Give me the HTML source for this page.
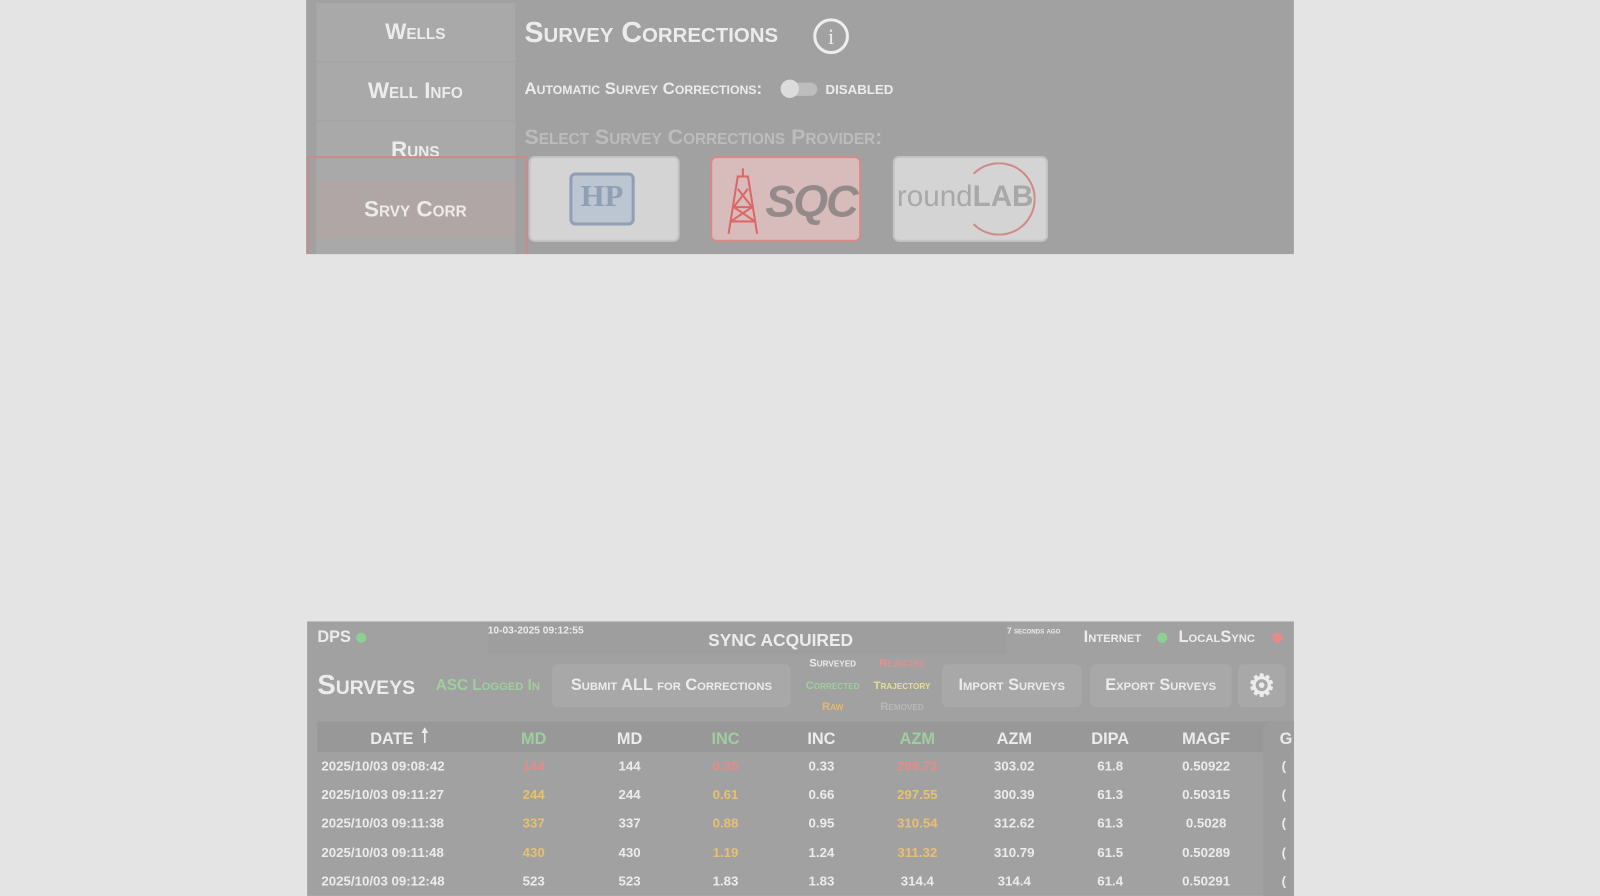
<!DOCTYPE html>
<html><head><style>
html,body{margin:0;padding:0;width:1600px;height:896px;overflow:hidden;background:#e4e4e4;}
#w{position:absolute;left:0;top:0;width:1568px;height:878px;transform:scale(1.0204);transform-origin:0 0;font-family:"Liberation Sans Narrow","Liberation Sans",sans-serif;font-weight:bold;color:#ececec;}
.a{position:absolute;white-space:nowrap;}
.sc{font-variant:small-caps;}
.c{transform:translateX(-50%);}
.dot{position:absolute;width:10px;height:10px;border-radius:50%;}
.btn{position:absolute;background:#a8a8a8;border-radius:6px;display:flex;align-items:center;justify-content:center;font-variant:small-caps;font-size:16px;}
.card{position:absolute;background:#d4d4d4;border:2px solid #c4c4c4;border-radius:6px;top:153px;height:80px;}
</style></head><body><div id="w">
<div class="a" style="left:300px;top:0;width:968px;height:249px;background:#a1a1a1;"></div>
<div class="a" style="left:310px;top:3px;width:195px;height:246px;background:#a9a9a9;"></div>
<div class="a" style="left:310px;top:60px;width:195px;height:1px;background:#a2a2a2;"></div>
<div class="a" style="left:310px;top:118px;width:195px;height:1px;background:#a2a2a2;"></div>
<div class="a sc c" style="left:407px;top:18px;font-size:22px;">Wells</div>
<div class="a sc c" style="left:407px;top:76px;font-size:22px;">Well Info</div>
<div class="a" style="left:310px;top:120px;width:195px;height:35px;overflow:hidden;"><div class="a sc c" style="left:97px;top:14px;font-size:22px;">Runs</div></div>
<div class="a" style="left:310px;top:155px;width:195px;height:94px;background:#a9a9a9;"></div>
<div class="a" style="left:310px;top:177px;width:195px;height:56px;background:#b1a6a6;"></div>
<div class="a sc c" style="left:407px;top:192px;font-size:22px;">Srvy Corr</div>
<div class="a" style="left:301px;top:153px;width:216px;height:96px;border:2px solid #c88a8a;border-bottom:none;box-sizing:border-box;"></div>
<div class="a sc" style="left:514px;top:16px;font-size:28px;">Survey Corrections</div>
<div class="a" style="left:797px;top:18px;width:35px;height:35px;border:3px solid #eee;border-radius:50%;box-sizing:border-box;text-align:center;font-size:22px;line-height:29px;font-family:'Liberation Serif',serif;font-weight:normal;">i</div>
<div class="a sc" style="left:514px;top:78px;font-size:16.5px;">Automatic Survey Corrections:</div>
<div class="a" style="left:766px;top:81px;width:35px;height:13px;background:#bdbdbd;border-radius:7px;"></div>
<div class="a" style="left:765px;top:78px;width:18px;height:18px;background:#dcdcdc;border-radius:50%;"></div>
<div class="a" style="left:809px;top:80px;font-size:13px;">DISABLED</div>
<div class="a sc" style="left:514px;top:123px;font-size:21px;color:#bcbcbc;">Select Survey Corrections Provider:</div>
<div class="card" style="left:518px;width:144px;">
 <div class="a" style="left:38px;top:14px;width:64px;height:52px;border:3px solid #8f9fb4;border-radius:6px;background:#bcc6d2;box-sizing:border-box;text-align:center;color:#8f9fb4;font-size:30px;line-height:42px;font-family:'Liberation Serif',serif;">HP</div>
</div>
<div class="card" style="left:696px;width:144px;background:#d8bcbc;border-color:#d48a8a;">
 <svg class="a" style="left:10px;top:8px" width="40" height="68" viewBox="0 0 40 68"><g stroke="#d66" stroke-width="2" fill="none"><path d="M20 2v8M14 10h12M15 10L6 66M25 10L34 66M10 40h20M8 54h24M15 22l14 18M25 22L11 40M11 40l21 14M29 40L8 54"/></g></svg>
 <div class="a" style="left:52px;top:18px;font-size:44px;font-style:italic;color:#948a8a;letter-spacing:-2px;">SQC</div>
</div>
<div class="card" style="left:875px;width:148px;">
 <div class="a" style="left:66px;top:4px;width:72px;height:72px;border:2px solid #d08a8a;border-radius:50%;box-sizing:border-box;border-left-color:transparent;"></div>
 <div class="a" style="left:2px;top:22px;font-size:29px;color:#a8a8a8;font-family:'Liberation Sans',sans-serif;"><span style="font-weight:normal">round</span>LAB</div>
</div>

<div class="a" style="left:301px;top:609px;width:967px;height:269px;background:#a1a1a1;"></div>
<div class="a" style="left:478px;top:611px;width:508px;height:30px;background:#9e9e9e;"></div>
<div class="a" style="left:311px;top:616px;font-size:16px;">DPS</div>
<div class="dot" style="left:349px;top:620px;background:#8fcf8f;"></div>
<div class="a" style="left:478px;top:613px;font-size:10px;">10-03-2025 09:12:55</div>
<div class="a c" style="left:765px;top:618px;font-size:17px;">SYNC ACQUIRED</div>
<div class="a sc" style="left:987px;top:614px;font-size:8px;">7 seconds ago</div>
<div class="a sc" style="left:1062px;top:616px;font-size:16px;">Internet</div>
<div class="dot" style="left:1134px;top:620px;background:#8fcf8f;"></div>
<div class="a sc" style="left:1155px;top:616px;font-size:16px;">LocalSync</div>
<div class="dot" style="left:1247px;top:620px;background:#e88a8a;"></div>

<div class="a sc" style="left:311px;top:656px;font-size:27px;">Surveys</div>
<div class="a sc" style="left:427px;top:663px;font-size:15px;color:#9fce9f;">ASC Logged In</div>
<div class="btn" style="left:541px;top:651px;width:234px;height:42px;">Submit ALL for Corrections</div>
<div class="a sc c" style="left:816px;top:644px;font-size:11px;">Surveyed</div>
<div class="a sc c" style="left:884px;top:644px;font-size:11px;color:#e49090;">Rejected</div>
<div class="a sc c" style="left:816px;top:666px;font-size:11px;color:#9fce9f;">Corrected</div>
<div class="a sc c" style="left:884px;top:666px;font-size:11px;color:#e4e090;">Trajectory</div>
<div class="a sc c" style="left:816px;top:687px;font-size:11px;color:#e4b870;">Raw</div>
<div class="a sc c" style="left:884px;top:687px;font-size:11px;color:#b8b8b8;">Removed</div>
<div class="btn" style="left:923px;top:651px;width:137px;height:42px;">Import Surveys</div>
<div class="btn" style="left:1068px;top:651px;width:139px;height:42px;">Export Surveys</div>
<div class="btn" style="left:1213px;top:651px;width:47px;height:42px;font-size:30px;font-variant:normal;">⚙</div>

<div class="a" style="left:311px;top:707px;width:957px;height:30px;background:#989898;"></div>
<div class="a" style="left:1238px;top:707px;width:30px;height:171px;background:#9c9c9c;border-radius:8px 0 0 0;"></div>
<div style="font-size:16px;">
<div class="a c" style="left:384px;top:716px;">DATE</div>
<div class="a" style="left:412px;top:711px;font-size:20px;line-height:20px;font-weight:normal;">🠕</div>
<div class="a c" style="left:523px;top:716px;color:#9fce9f;">MD</div>
<div class="a c" style="left:617px;top:716px;">MD</div>
<div class="a c" style="left:711px;top:716px;color:#9fce9f;">INC</div>
<div class="a c" style="left:805px;top:716px;">INC</div>
<div class="a c" style="left:899px;top:716px;color:#9fce9f;">AZM</div>
<div class="a c" style="left:994px;top:716px;">AZM</div>
<div class="a c" style="left:1088px;top:716px;">DIPA</div>
<div class="a c" style="left:1182px;top:716px;">MAGF</div>
<div class="a" style="left:1254px;top:716px;">G</div>
</div>

<div style="font-size:13px;">
<div class="a" style="left:315px;top:743px;">2025/10/03 09:08:42</div>
<div class="a c" style="left:523px;top:743px;color:#e88a8a;">144</div><div class="a c" style="left:617px;top:743px;">144</div>
<div class="a c" style="left:711px;top:743px;color:#e88a8a;">0.35</div><div class="a c" style="left:805px;top:743px;">0.33</div>
<div class="a c" style="left:899px;top:743px;color:#e88a8a;">299.72</div><div class="a c" style="left:994px;top:743px;">303.02</div>
<div class="a c" style="left:1088px;top:743px;">61.8</div><div class="a c" style="left:1182px;top:743px;">0.50922</div><div class="a" style="left:1256px;top:743px;">(</div>

<div class="a" style="left:315px;top:771px;">2025/10/03 09:11:27</div>
<div class="a c" style="left:523px;top:771px;color:#e8c070;">244</div><div class="a c" style="left:617px;top:771px;">244</div>
<div class="a c" style="left:711px;top:771px;color:#e8c070;">0.61</div><div class="a c" style="left:805px;top:771px;">0.66</div>
<div class="a c" style="left:899px;top:771px;color:#e8c070;">297.55</div><div class="a c" style="left:994px;top:771px;">300.39</div>
<div class="a c" style="left:1088px;top:771px;">61.3</div><div class="a c" style="left:1182px;top:771px;">0.50315</div><div class="a" style="left:1256px;top:771px;">(</div>

<div class="a" style="left:315px;top:799px;">2025/10/03 09:11:38</div>
<div class="a c" style="left:523px;top:799px;color:#e8c070;">337</div><div class="a c" style="left:617px;top:799px;">337</div>
<div class="a c" style="left:711px;top:799px;color:#e8c070;">0.88</div><div class="a c" style="left:805px;top:799px;">0.95</div>
<div class="a c" style="left:899px;top:799px;color:#e8c070;">310.54</div><div class="a c" style="left:994px;top:799px;">312.62</div>
<div class="a c" style="left:1088px;top:799px;">61.3</div><div class="a c" style="left:1182px;top:799px;">0.5028</div><div class="a" style="left:1256px;top:799px;">(</div>

<div class="a" style="left:315px;top:828px;">2025/10/03 09:11:48</div>
<div class="a c" style="left:523px;top:828px;color:#e8c070;">430</div><div class="a c" style="left:617px;top:828px;">430</div>
<div class="a c" style="left:711px;top:828px;color:#e8c070;">1.19</div><div class="a c" style="left:805px;top:828px;">1.24</div>
<div class="a c" style="left:899px;top:828px;color:#e8c070;">311.32</div><div class="a c" style="left:994px;top:828px;">310.79</div>
<div class="a c" style="left:1088px;top:828px;">61.5</div><div class="a c" style="left:1182px;top:828px;">0.50289</div><div class="a" style="left:1256px;top:828px;">(</div>

<div class="a" style="left:315px;top:856px;">2025/10/03 09:12:48</div>
<div class="a c" style="left:523px;top:856px;">523</div><div class="a c" style="left:617px;top:856px;">523</div>
<div class="a c" style="left:711px;top:856px;">1.83</div><div class="a c" style="left:805px;top:856px;">1.83</div>
<div class="a c" style="left:899px;top:856px;">314.4</div><div class="a c" style="left:994px;top:856px;">314.4</div>
<div class="a c" style="left:1088px;top:856px;">61.4</div><div class="a c" style="left:1182px;top:856px;">0.50291</div><div class="a" style="left:1256px;top:856px;">(</div>
</div>
</div></body></html>
